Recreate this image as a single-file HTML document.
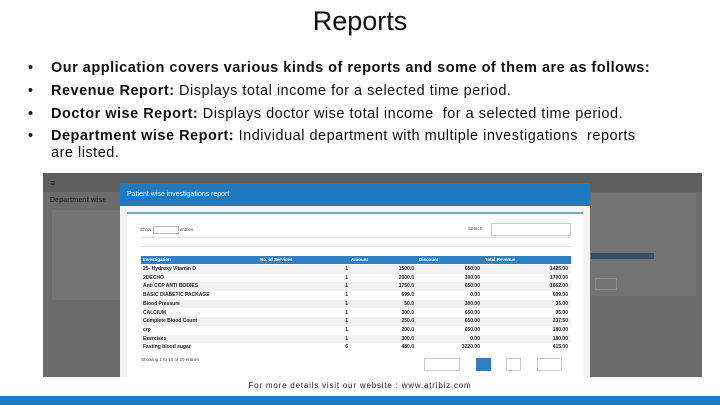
<!DOCTYPE html>
<html><head><style>
*{margin:0;padding:0;box-sizing:border-box}
body{width:720px;height:405px;background:#fff;position:relative;overflow:hidden;font-family:"Liberation Sans",sans-serif}
.t{position:absolute;left:0;width:720px;top:6px;text-align:center;font-size:27px;color:#111}
.b{position:absolute;left:28px;font-size:14.5px;color:#111;letter-spacing:.5px;line-height:17px}
.b span{position:absolute;left:0}
.b p{margin-left:23px}
.ab{position:absolute}
.r{position:absolute;left:141px;width:430px;height:8.7px;font-size:5px;color:#222;font-weight:bold;line-height:8.7px}
.r i{position:absolute;font-style:normal}
.r i:nth-child(2){right:223px}.r i:nth-child(3){right:157px}.r i:nth-child(4){right:91px}.r i:nth-child(5){right:3px}
</style></head><body>
<div class="t">Reports</div>
<div class="b" style="top:60px">
<div style="position:relative;height:23px"><span>•</span><p><b>Our application covers various kinds of reports and some of them are as follows:</b></p></div>
<div style="position:relative;height:23px"><span>•</span><p><b>Revenue Report:</b> Displays total income for a selected time period.</p></div>
<div style="position:relative;height:22px"><span>•</span><p><b>Doctor wise Report:</b> Displays doctor wise total income&nbsp; for a selected time period.</p></div>
<div style="position:relative;height:40px"><span>•</span><p><b>Department wise Report:</b> Individual department with multiple investigations&nbsp; reports<br>are listed.</p></div>
</div>
<div class="ab" style="left:43px;top:173px;width:659px;height:204px;background:#6c6c6c"></div>
<div class="ab" style="left:43px;top:173px;width:659px;height:19px;background:#5e5e5e"></div>
<div class="ab" style="left:50px;top:178px;color:#222;font-size:9px">≡</div>
<div class="ab" style="left:50px;top:197px;color:#333;font-size:7px;font-weight:bold">Department wise</div>
<div class="ab" style="left:52px;top:210px;width:70px;height:90px;background:#757575"></div>
<div class="ab" style="left:591px;top:193px;width:105px;height:103px;background:#747474"></div>
<div class="ab" style="left:591px;top:253px;width:63px;height:6px;background:#37506a"></div>
<div class="ab" style="left:595px;top:278px;width:22px;height:12px;border:1px solid #888"></div>
<div class="ab" style="left:120px;top:183px;width:470px;height:194px;background:#f4f4f4"></div>
<div class="ab" style="left:120px;top:183px;width:470px;height:23px;background:#1e7ac0"></div>
<div class="ab" style="left:127px;top:191px;color:#e8f2fb;font-size:7px">Patient wise investigations report</div>
<div class="ab" style="left:127px;top:212px;width:456px;height:2px;background:#7aa8cc"></div>
<div class="ab" style="left:127px;top:214px;width:456px;height:163px;background:#fff"></div>
<div class="ab" style="left:140px;top:226px;font-size:4.5px;color:#444">Show <span style="display:inline-block;width:26px;height:8px;border:1px solid #bbb;vertical-align:middle"></span> entries</div>
<div class="ab" style="left:468px;top:226px;font-size:4.5px;color:#444">Search:</div>
<div class="ab" style="left:491px;top:223px;width:80px;height:13px;border:1px solid #ccc"></div>
<div class="ab" style="left:141px;top:237px;width:430px;height:1px;background:#e4e4e4"></div>
<div class="ab" style="left:141px;top:246px;width:430px;height:1px;background:#e4e4e4"></div>
<div class="ab" style="left:141px;top:256px;width:430px;height:8px;background:#2f7fc3"></div>
<div class="ab" style="left:143px;top:257px;font-size:4.5px;color:#fff;font-weight:bold">Investigation</div>
<div class="ab" style="left:260px;top:257px;font-size:4.5px;color:#fff;font-weight:bold">No. of Services</div>
<div class="ab" style="left:351px;top:257px;font-size:4.5px;color:#fff;font-weight:bold">Amount</div>
<div class="ab" style="left:419px;top:257px;font-size:4.5px;color:#fff;font-weight:bold">Discount</div>
<div class="ab" style="left:485px;top:257px;font-size:4.5px;color:#fff;font-weight:bold">Total Revenue</div>
<div class="r" style="top:265px;background:#f1f1f1"><i style="left:2px">25- Hydroxy Vitamin D</i><i>1</i><i>1500.0</i><i>650.00</i><i>1425.00</i></div>
<div class="r" style="top:273.7px"><i style="left:2px">2DECHO</i><i>1</i><i>2000.0</i><i>300.00</i><i>1700.00</i></div>
<div class="r" style="top:282.4px;background:#f1f1f1"><i style="left:2px">Anti CCP ANTI BODIES</i><i>1</i><i>1750.0</i><i>650.00</i><i>1662.00</i></div>
<div class="r" style="top:291.1px"><i style="left:2px">BASIC DIABETIC PACKAGE</i><i>1</i><i>699.0</i><i>0.00</i><i>699.00</i></div>
<div class="r" style="top:299.8px;background:#f1f1f1"><i style="left:2px">Blood Pressure</i><i>1</i><i>50.0</i><i>300.00</i><i>35.00</i></div>
<div class="r" style="top:308.5px"><i style="left:2px">CALCIUM</i><i>1</i><i>300.0</i><i>650.00</i><i>95.00</i></div>
<div class="r" style="top:317.2px;background:#f1f1f1"><i style="left:2px">Complete Blood Count</i><i>1</i><i>250.0</i><i>650.00</i><i>237.50</i></div>
<div class="r" style="top:325.9px"><i style="left:2px">crp</i><i>1</i><i>200.0</i><i>650.00</i><i>180.00</i></div>
<div class="r" style="top:334.6px;background:#f1f1f1"><i style="left:2px">Exercises</i><i>1</i><i>300.0</i><i>0.00</i><i>180.00</i></div>
<div class="r" style="top:343.3px"><i style="left:2px">Fasting blood sugar</i><i>6</i><i>480.0</i><i>3220.00</i><i>415.00</i></div>
<div class="ab" style="left:141px;top:357px;font-size:4.5px;color:#444">Showing 1 to 10 of 20 entries</div>
<div class="ab" style="left:424px;top:358px;width:36px;height:13px;border:1px solid #ccc"></div>
<div class="ab" style="left:476px;top:358px;width:15px;height:13px;background:#2f7fc3"></div>
<div class="ab" style="left:506px;top:358px;width:15px;height:13px;border:1px solid #ccc"></div>
<div class="ab" style="left:537px;top:358px;width:25px;height:13px;border:1px solid #ccc"></div>
<div class="ab" style="left:0;top:381px;width:720px;text-align:center;font-size:8px;color:#222;letter-spacing:.8px">For more details visit our website : www.atribiz.com</div>
<div class="ab" style="left:0;top:396px;width:720px;height:9px;background:#1e7ac0"></div>
</body></html>
